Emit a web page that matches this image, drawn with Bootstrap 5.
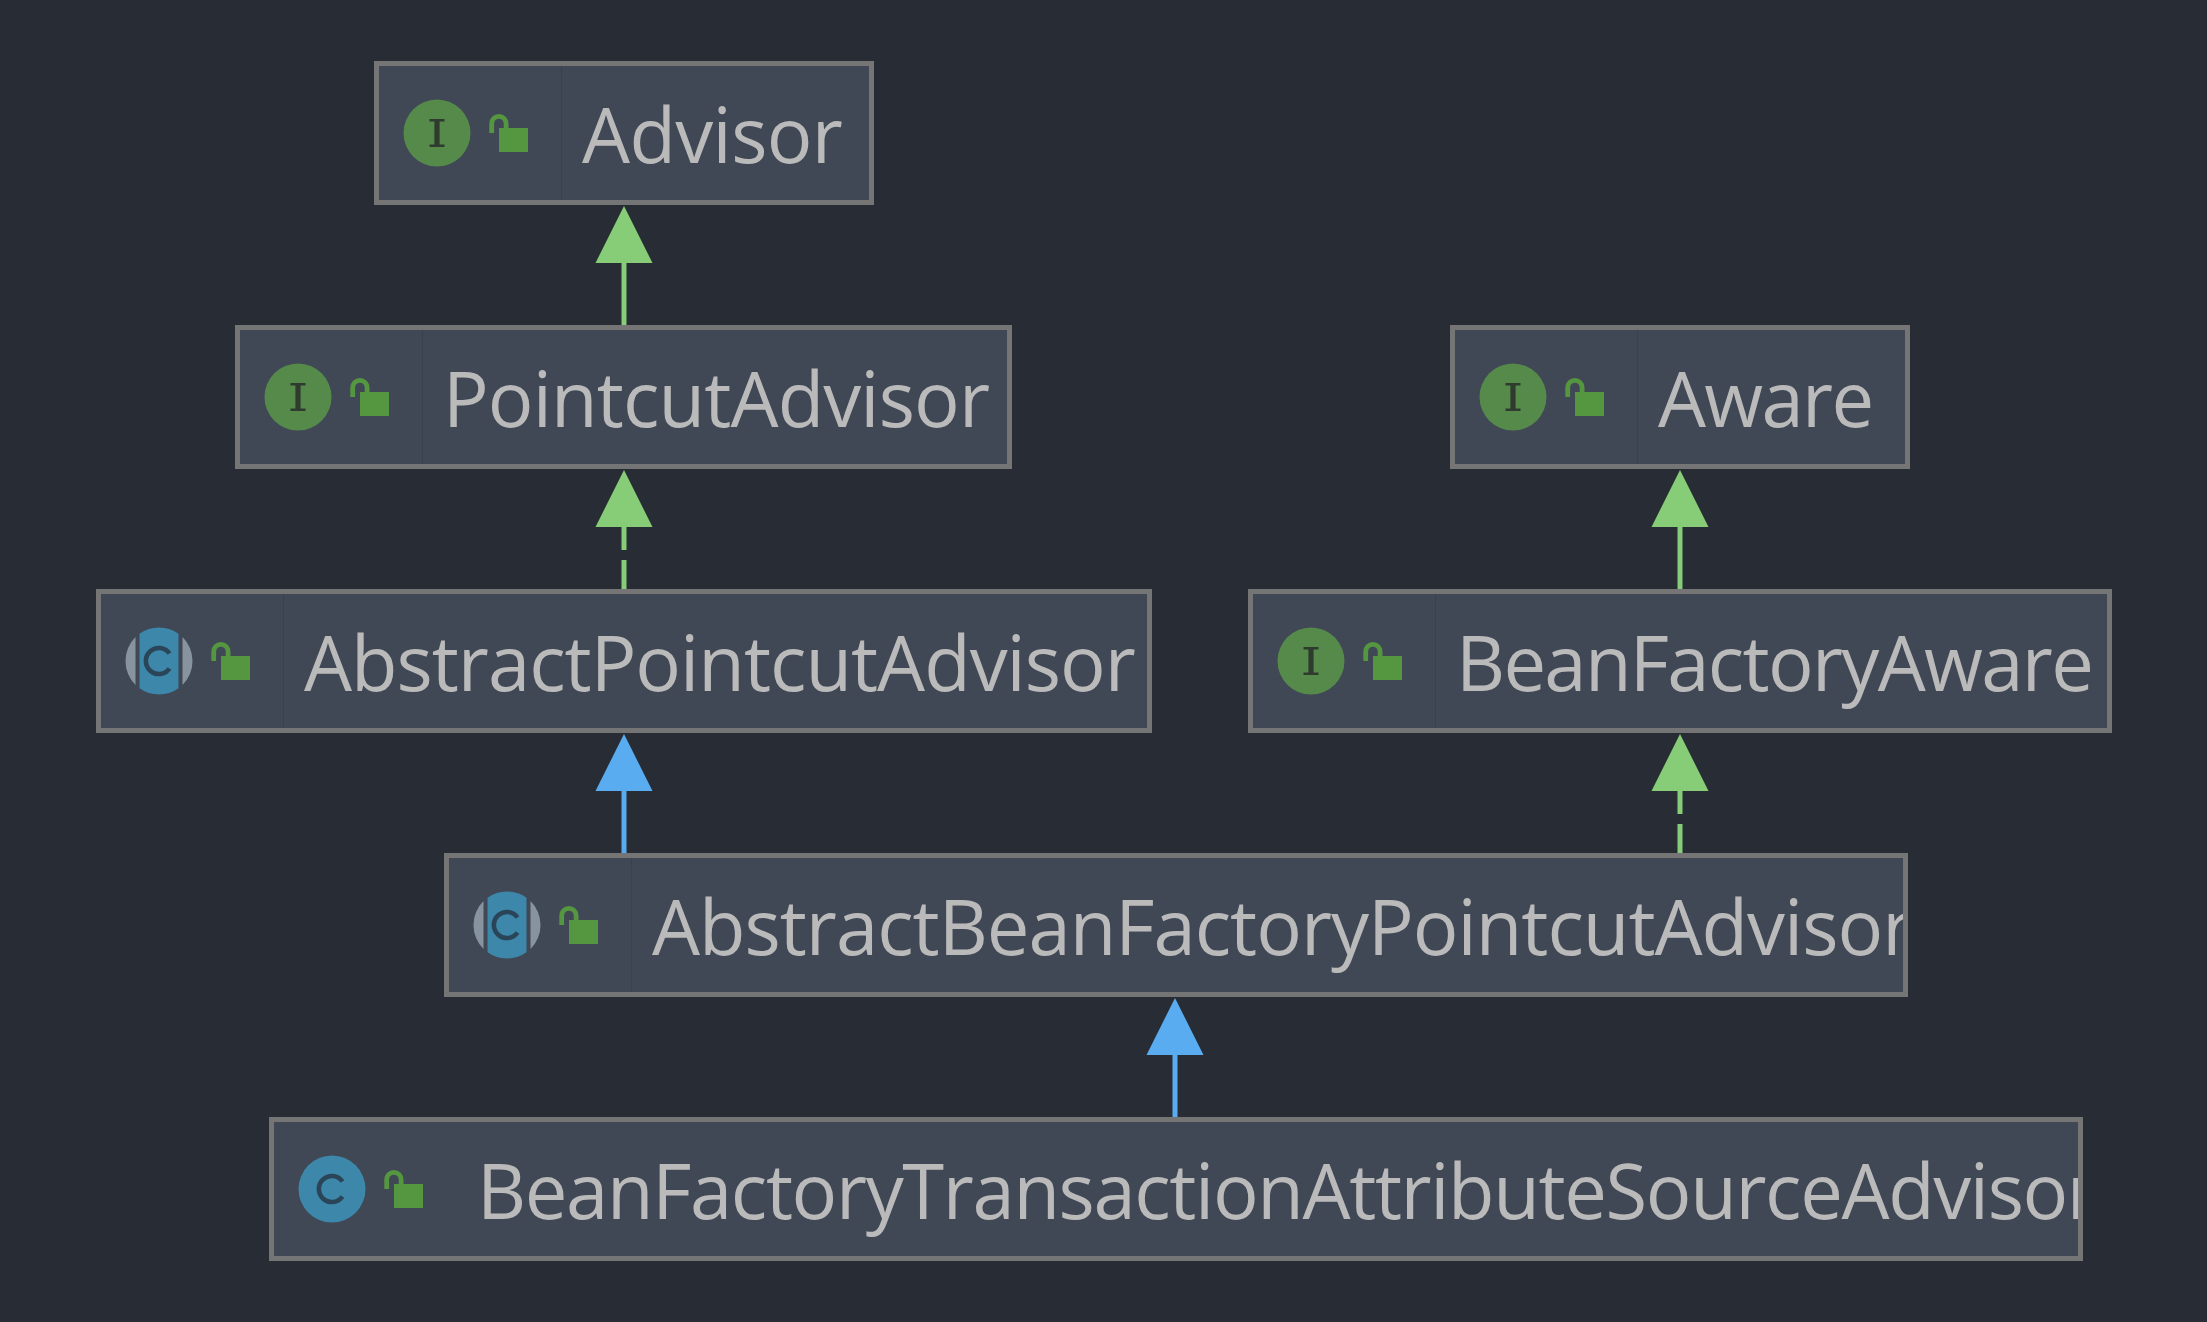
<!DOCTYPE html>
<html lang="en">
<head>
<meta charset="utf-8">
<title>Advisor class diagram</title>
<link href="https://cdn.jsdelivr.net/npm/bootstrap@5.3.0/dist/css/bootstrap.min.css" rel="stylesheet">
<style>
html,body{height:100%;margin:0;background:#282c34;overflow:hidden}
.uml-canvas{width:2207px;height:1322px;background:#282c34}
.uml-edges{left:0;top:0}
.uml-node{height:144px;background:#404755;border:5px solid #757575;box-sizing:border-box}
.uml-head{width:183px;height:100%;padding-left:24px;border-right:1px solid #3a404d}
.uml-head-plain{border-right-color:transparent}
.uml-label{padding-left:20px;font-family:"Open Sans","Liberation Sans",sans-serif;font-size:76px;line-height:1;color:#bababa;min-width:0;position:relative;top:1px}
.n-advisor{left:374px;top:61px;width:500px}
.n-advisor .uml-label{letter-spacing:-.64px}
.n-pointcut{left:235px;top:325px;width:777px}
.n-pointcut .uml-label{letter-spacing:-.87px}
.n-aware{left:1450px;top:325px;width:460px}
.n-aware .uml-label{letter-spacing:-1.7px}
.n-abstract{left:96px;top:589px;width:1056px}
.n-abstract .uml-label{letter-spacing:-1px}
.n-factory{left:1248px;top:589px;width:864px}
.n-factory .uml-label{letter-spacing:-1.7px}
.n-abf{left:444px;top:853px;width:1464px}
.n-abf .uml-label{letter-spacing:-1px}
.n-tx{left:269px;top:1117px;width:1814px}
.n-tx .uml-label{letter-spacing:-1.37px}
</style>
</head>
<body>
<div class="uml-canvas position-relative">
<svg width="0" height="0" class="position-absolute">
<defs>
<g id="ic-lock">
<rect x="62" y="-5" width="29" height="24" fill="#559740"/>
<path d="M54.7 0V-9.500a7.200 7.200 0 0 1 14.400 0V-5" fill="none" stroke="#559740" stroke-width="4.800"/>
</g>
<symbol id="i-iface" viewBox="-34 -34 130 68">
<circle r="33.500" fill="#558a4a"/>
<path d="M-7.500-14H7.500V-11.400H2.600V11.400H7.500V14H-7.500V11.400H-2.600V-11.400H-7.500Z" fill="#2f3b2e"/>
<use href="#ic-lock"/>
</symbol>
<symbol id="i-class" viewBox="-34 -34 130 68">
<circle r="33.500" fill="#3d88aa"/>
<path d="M10.500-7.500A13 13 0 1 0 10.500 7.500" fill="none" stroke="#2b4558" stroke-width="4.600"/>
<use href="#ic-lock"/>
</symbol>
<symbol id="i-abstract" viewBox="-34 -34 130 68">
<path d="M-23.500-23.900A33.500 33.500 0 0 0-23.500 23.900ZM23.500-23.900A33.500 33.500 0 0 1 23.500 23.900Z" fill="#87949f"/>
<path d="M-19.500-27.200A33.500 33.500 0 0 1 19.500-27.200V27.200A33.500 33.500 0 0 1-19.500 27.200Z" fill="#3d88aa"/>
<path d="M10.500-7.500A13 13 0 1 0 10.500 7.500" fill="none" stroke="#2b4558" stroke-width="4.600"/>
<use href="#ic-lock"/>
</symbol>
</defs>
</svg>

<svg class="uml-edges position-absolute" width="2207" height="1322" viewBox="0 0 2207 1322">
<g fill="#87cc76" stroke="#87cc76">
<path d="M624 206L652.500 263H595.500Z" stroke="none"/><path d="M624 263V325" stroke-width="5"/>
<path d="M624 470L652.500 527H595.500Z" stroke="none"/><path d="M624 527V589" stroke-width="5" stroke-dasharray="23 10 29"/>
<path d="M1680 470L1708.500 527H1651.500Z" stroke="none"/><path d="M1680 527V589" stroke-width="5"/>
<path d="M1680 734L1708.500 791H1651.500Z" stroke="none"/><path d="M1680 791V853" stroke-width="5" stroke-dasharray="23 10 29"/>
</g>
<g fill="#5aacf0" stroke="#5aacf0">
<path d="M624 734L652.500 791H595.500Z" stroke="none"/><path d="M624 791V853" stroke-width="5"/>
<path d="M1175 998L1203.500 1055H1146.500Z" stroke="none"/><path d="M1175 1055V1117" stroke-width="5"/>
</g>
</svg>

<div class="uml-node n-advisor position-absolute d-flex align-items-center overflow-hidden">
<div class="uml-head flex-shrink-0 d-flex align-items-center"><svg width="130" height="68"><use href="#i-iface"/></svg></div>
<div class="uml-label text-nowrap">Advisor</div></div>

<div class="uml-node n-pointcut position-absolute d-flex align-items-center overflow-hidden">
<div class="uml-head flex-shrink-0 d-flex align-items-center"><svg width="130" height="68"><use href="#i-iface"/></svg></div>
<div class="uml-label text-nowrap">PointcutAdvisor</div></div>

<div class="uml-node n-aware position-absolute d-flex align-items-center overflow-hidden">
<div class="uml-head flex-shrink-0 d-flex align-items-center"><svg width="130" height="68"><use href="#i-iface"/></svg></div>
<div class="uml-label text-nowrap">Aware</div></div>

<div class="uml-node n-abstract position-absolute d-flex align-items-center overflow-hidden">
<div class="uml-head flex-shrink-0 d-flex align-items-center"><svg width="130" height="68"><use href="#i-abstract"/></svg></div>
<div class="uml-label text-nowrap">AbstractPointcutAdvisor</div></div>

<div class="uml-node n-factory position-absolute d-flex align-items-center overflow-hidden">
<div class="uml-head flex-shrink-0 d-flex align-items-center"><svg width="130" height="68"><use href="#i-iface"/></svg></div>
<div class="uml-label text-nowrap">BeanFactoryAware</div></div>

<div class="uml-node n-abf position-absolute d-flex align-items-center overflow-hidden">
<div class="uml-head flex-shrink-0 d-flex align-items-center"><svg width="130" height="68"><use href="#i-abstract"/></svg></div>
<div class="uml-label text-nowrap">AbstractBeanFactoryPointcutAdvisor</div></div>

<div class="uml-node n-tx position-absolute d-flex align-items-center overflow-hidden">
<div class="uml-head uml-head-plain flex-shrink-0 d-flex align-items-center"><svg width="130" height="68"><use href="#i-class"/></svg></div>
<div class="uml-label text-nowrap">BeanFactoryTransactionAttributeSourceAdvisor</div></div>
</div>
<script src="https://cdn.jsdelivr.net/npm/bootstrap@5.3.0/dist/js/bootstrap.bundle.min.js"></script>
</body>
</html>
